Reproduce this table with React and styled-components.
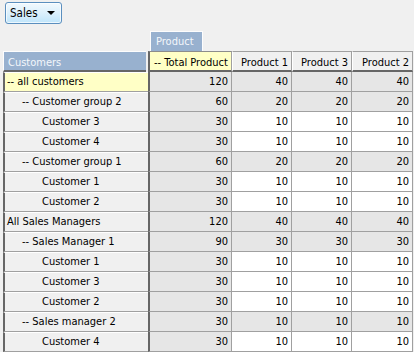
import React from "react";
import styled, { createGlobalStyle } from "styled-components";

const Global = createGlobalStyle`
  html, body { margin: 0; padding: 0; background: #f0f0f0; }
  body { font-family: "DejaVu Sans Condensed", "DejaVu Sans", "Liberation Sans", sans-serif; font-size: 11px; color: #000; }
`;

const Page = styled.div`
  width: 414px;
  height: 352px;
  overflow: hidden;
  display: flex;
  flex-direction: column;
`;

const Toolbar = styled.div`
  display: flex;
  padding: 2px 0 0 5px;
  height: 22px;
`;

const DropButton = styled.div`
  box-sizing: border-box;
  width: 57px;
  height: 22px;
  border: 1px solid #5b8fbf;
  border-radius: 3px;
  background: linear-gradient(#f2f9fe, #dcf0fc 50%, #bfe5fb);
  box-shadow: inset 0 0 0 1px rgba(255,255,255,0.7);
  display: flex;
  align-items: center;
  justify-content: space-between;
  padding: 0 6px 0 4px;
  font-size: 11.5px;
`;

const Arrow = styled.span`
  width: 0;
  height: 0;
  border-left: 4px solid transparent;
  border-right: 4px solid transparent;
  border-top: 4px solid #000;
`;

const TabRow = styled.div`
  display: flex;
  padding: 7px 0 0 150px;
  height: 20px;
`;

const Tab = styled.div`
  box-sizing: border-box;
  width: 53px;
  height: 20px;
  background: #98b1cf;
  border-top: 1px solid #fdfdfd;
  border-left: 1px solid #fdfdfd;
  border-right: 1px solid #fdfdfd;
  color: #f4f7fb;
  font-size: 11px;
  padding: 3px 0 0 5px;
`;

const Grid = styled.div`
  display: grid;
  grid-template-columns: 145px 84px 60px 60px 61px;
  grid-template-rows: 21px;
  grid-auto-rows: 20px;
  margin-left: 3px;
`;

const CornerHeader = styled.div`
  box-sizing: border-box;
  background: #98b1cf;
  color: #f4f7fb;
  margin-right: 2px;
  padding: 4px 0 0 4px;
  border-top: 1px solid #fdfdfd;
  border-left: 1px solid #fdfdfd;
  border-bottom: 2px solid #666;
`;

const ColHeader = styled.div`
  box-sizing: border-box;
  background: ${(p) => (p.$total ? "#ffffc6" : "#f0f0f0")};
  border-top: 1px solid ${(p) => (p.$total ? "#8c8c8c" : "#a0a0a0")};
  border-left: ${(p) => (p.$total ? "2px solid #666" : "1px solid #fff")};
  border-right: 1px solid #a0a0a0;
  border-bottom: 2px solid #666;
  text-align: ${(p) => (p.$total ? "left" : "right")};
  padding: 4px 3px 0 4px;
  white-space: nowrap;
`;

const RowHeader = styled.div`
  box-sizing: border-box;
  background: ${(p) => (p.$highlight ? "#ffffc6" : "#f0f0f0")};
  border-left: 2px solid #666;
  border-bottom: 1px solid #a0a0a0;
  border-top: 1px solid #fff;
  padding: 2px 0 0 ${(p) => [2, 17, 37][p.$level]}px;
  white-space: nowrap;
`;

const Cell = styled.div`
  box-sizing: border-box;
  background: ${(p) => (p.$gray ? "#e6e6e6" : "#fff")};
  border-left: ${(p) => (p.$total ? "2px solid #666" : "none")};
  border-right: 1px solid #a0a0a0;
  border-bottom: 1px solid #a0a0a0;
  text-align: right;
  padding: 3px 3px 0 0;
`;

const rows = [
  { label: "-- all customers", level: 0, agg: true, hl: true, v: [120, 40, 40, 40] },
  { label: "-- Customer group 2", level: 1, agg: true, v: [60, 20, 20, 20] },
  { label: "Customer 3", level: 2, v: [30, 10, 10, 10] },
  { label: "Customer 4", level: 2, v: [30, 10, 10, 10] },
  { label: "-- Customer group 1", level: 1, agg: true, v: [60, 20, 20, 20] },
  { label: "Customer 1", level: 2, v: [30, 10, 10, 10] },
  { label: "Customer 2", level: 2, v: [30, 10, 10, 10] },
  { label: "All Sales Managers", level: 0, agg: true, v: [120, 40, 40, 40] },
  { label: "-- Sales Manager 1", level: 1, agg: true, v: [90, 30, 30, 30] },
  { label: "Customer 1", level: 2, v: [30, 10, 10, 10] },
  { label: "Customer 3", level: 2, v: [30, 10, 10, 10] },
  { label: "Customer 2", level: 2, v: [30, 10, 10, 10] },
  { label: "-- Sales manager 2", level: 1, agg: true, v: [30, 10, 10, 10] },
  { label: "Customer 4", level: 2, v: [30, 10, 10, 10] },
];

export default function App() {
  return (
    <Page>
      <Global />
      <Toolbar>
        <DropButton>
          <span>Sales</span>
          <Arrow />
        </DropButton>
      </Toolbar>
      <TabRow>
        <Tab>Product</Tab>
      </TabRow>
      <Grid>
        <CornerHeader>Customers</CornerHeader>
        <ColHeader $total>-- Total Product</ColHeader>
        <ColHeader>Product 1</ColHeader>
        <ColHeader>Product 3</ColHeader>
        <ColHeader>Product 2</ColHeader>
        {rows.map((r, i) => (
          <React.Fragment key={i}>
            <RowHeader $level={r.level} $highlight={r.hl}>{r.label}</RowHeader>
            {r.v.map((n, j) => (
              <Cell key={j} $total={j === 0} $gray={j === 0 || r.agg}>{n}</Cell>
            ))}
          </React.Fragment>
        ))}
      </Grid>
    </Page>
  );
}
